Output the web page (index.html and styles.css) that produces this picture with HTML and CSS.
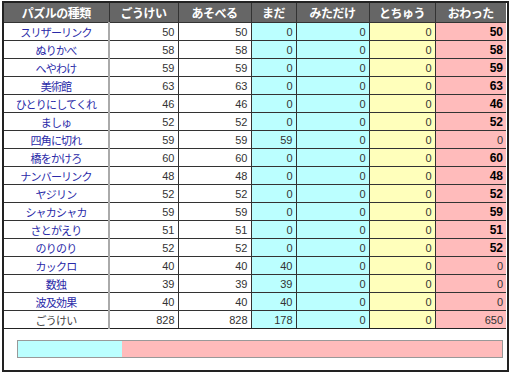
FILE: index.html
```html
<!DOCTYPE html>
<html lang="ja">
<head>
<meta charset="utf-8">
<link rel="stylesheet" href="styles.css">
</head>
<body>
<div class="wrap">
<table class="stats">
<colgroup>
<col class="c-name"><col class="c-total"><col class="c-play"><col class="c-mada"><col class="c-mita"><col class="c-tochu"><col class="c-owa">
</colgroup>
<thead>
<tr><th class="name">パズルの種類</th><th>ごうけい</th><th>あそべる</th><th>まだ</th><th>みただけ</th><th>とちゅう</th><th>おわった</th></tr>
</thead>
<tbody>
<tr><td class="name">スリザーリンク</td><td>50</td><td>50</td><td class="cy">0</td><td class="cy">0</td><td class="ye">0</td><td class="pk done">50</td></tr>
<tr><td class="name">ぬりかべ</td><td>58</td><td>58</td><td class="cy">0</td><td class="cy">0</td><td class="ye">0</td><td class="pk done">58</td></tr>
<tr><td class="name">へやわけ</td><td>59</td><td>59</td><td class="cy">0</td><td class="cy">0</td><td class="ye">0</td><td class="pk done">59</td></tr>
<tr><td class="name">美術館</td><td>63</td><td>63</td><td class="cy">0</td><td class="cy">0</td><td class="ye">0</td><td class="pk done">63</td></tr>
<tr><td class="name">ひとりにしてくれ</td><td>46</td><td>46</td><td class="cy">0</td><td class="cy">0</td><td class="ye">0</td><td class="pk done">46</td></tr>
<tr><td class="name">ましゅ</td><td>52</td><td>52</td><td class="cy">0</td><td class="cy">0</td><td class="ye">0</td><td class="pk done">52</td></tr>
<tr><td class="name">四角に切れ</td><td>59</td><td>59</td><td class="cy">59</td><td class="cy">0</td><td class="ye">0</td><td class="pk">0</td></tr>
<tr><td class="name">橋をかけろ</td><td>60</td><td>60</td><td class="cy">0</td><td class="cy">0</td><td class="ye">0</td><td class="pk done">60</td></tr>
<tr><td class="name">ナンバーリンク</td><td>48</td><td>48</td><td class="cy">0</td><td class="cy">0</td><td class="ye">0</td><td class="pk done">48</td></tr>
<tr><td class="name">ヤジリン</td><td>52</td><td>52</td><td class="cy">0</td><td class="cy">0</td><td class="ye">0</td><td class="pk done">52</td></tr>
<tr><td class="name">シャカシャカ</td><td>59</td><td>59</td><td class="cy">0</td><td class="cy">0</td><td class="ye">0</td><td class="pk done">59</td></tr>
<tr><td class="name">さとがえり</td><td>51</td><td>51</td><td class="cy">0</td><td class="cy">0</td><td class="ye">0</td><td class="pk done">51</td></tr>
<tr><td class="name">のりのり</td><td>52</td><td>52</td><td class="cy">0</td><td class="cy">0</td><td class="ye">0</td><td class="pk done">52</td></tr>
<tr><td class="name">カックロ</td><td>40</td><td>40</td><td class="cy">40</td><td class="cy">0</td><td class="ye">0</td><td class="pk">0</td></tr>
<tr><td class="name">数独</td><td>39</td><td>39</td><td class="cy">39</td><td class="cy">0</td><td class="ye">0</td><td class="pk">0</td></tr>
<tr><td class="name">波及効果</td><td>40</td><td>40</td><td class="cy">40</td><td class="cy">0</td><td class="ye">0</td><td class="pk">0</td></tr>
<tr class="sum"><td class="name">ごうけい</td><td>828</td><td>828</td><td class="cy">178</td><td class="cy">0</td><td class="ye">0</td><td class="pk">650</td></tr>
</tbody>
</table>
<div class="bar">
<div class="seg seg-cy" style="width:21.5%"></div>
<div class="seg seg-pk" style="width:78.5%"></div>
</div>
</div>
</body>
</html>
```
FILE: styles.css
```css
html, body { margin: 0; padding: 0; background: #fff; }
body { font-family: "Liberation Sans", "Noto Sans CJK JP", sans-serif; }
.wrap {
  margin: 1px 0 0 2px;
  width: 503px;
  border: 2px solid #222;
  padding-bottom: 12px;
}
.stats {
  border-collapse: collapse;
  table-layout: fixed;
  width: 502px;
}
.c-name { width: 105px; }
.c-total { width: 69px; }
.c-play { width: 73px; }
.c-mada { width: 45px; }
.c-mita { width: 73px; }
.c-tochu { width: 66px; }
.c-owa { width: 71px; }
.stats th {
  background: #666;
  color: #fff;
  font-weight: bold;
  font-size: 12px;
  font-family: "Noto Sans CJK JP", sans-serif;
  letter-spacing: -0.5px;
  height: 19px;
  padding: 0;
  border-left: 1px solid #333;
  border-bottom: 1px solid #333;
  text-align: center;
  line-height: 19px;
}
.stats th:first-child { border-left: none; }
.stats td {
  height: 17px;
  padding: 0 3px 0 0;
  font-size: 11px;
  line-height: 16px;
  text-align: right;
  color: #333;
  border-left: 1px solid #333;
  border-bottom: 1px solid #333;
  white-space: nowrap;
  overflow: hidden;
}
.stats td.name {
  border-left: none;
  border-right: 2px solid #aaa;
  text-align: center;
  padding: 0;
  color: #2a2aa8;
  font-family: "Noto Sans CJK JP", sans-serif;
  font-size: 11px;
  letter-spacing: -0.8px;
}
.stats tr.sum td { border-bottom: 1px solid #222; }
.stats tr.sum td.name { color: #444; }
.cy { background: #bbffff; }
.ye { background: #ffffbb; }
.pk { background: #ffbbbb; }
.stats td.done { font-weight: bold; color: #000; font-size: 12px; }
.bar {
  display: flex;
  margin: 11px 4px 0 13px;
  height: 16px;
  border: 1px solid #999;
}
.seg { height: 100%; }
.seg-cy { background: #bbffff; }
.seg-pk { background: #ffbbbb; }
```
